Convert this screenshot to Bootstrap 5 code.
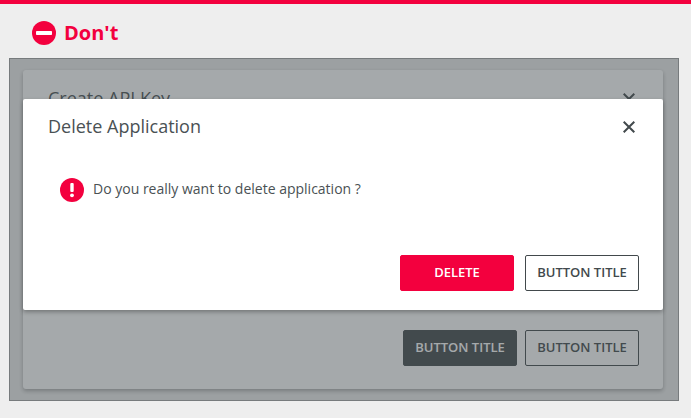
<!DOCTYPE html>
<html lang="en">
<head>
<meta charset="utf-8">
<title>Don't</title>
<link href="https://cdn.jsdelivr.net/npm/bootstrap@5.3.0/dist/css/bootstrap.min.css" rel="stylesheet">
<style>
html, body { height: 100%; }
body { background: #eeeeee; font-family: "Open Sans", "Noto Sans", sans-serif; color: #4a5154; overflow: hidden; }
.topline { height: 4px; background: #f3003e; }
.dont-head { height: 54px; padding: 3px 0 0 32px; gap: 8px; color: #f3003e; font-size: 20px; font-weight: 700; }
.stage { position: relative; height: 343px; margin: 0 12px 0 9px; border: 1px solid #777b7d; padding: 11px 15px 11px 13px; background: #eeeeee; }
.under-card { height: 319px; border-radius: 3px; background: #fff; box-shadow: 0 2px 4px rgba(0,0,0,.3); }
.under-head { height: 57px; padding: 0 28px 0 25px; font-size: 18px; margin-bottom: 203px; }
.under-foot { padding: 0 24px 0 0; gap: 8px; }
.scrim { position: absolute; inset: 0; background: rgba(66,75,79,.48); }
.dlg { position: absolute; left: 13px; right: 15px; top: 40px; height: 211px; background: #fff; border-radius: 2px; box-shadow: 0 2px 4px rgba(0,0,0,.3); }
.dlg-head { height: 57px; padding: 0 28px 2px 25px; font-size: 18px; }
.dlg-body { height: 99px; padding: 0 37px 32px; gap: 9px; font-size: 14px; }
.dlg-body span { position: relative; top: -1px; }
.dlg-foot { padding-right: 24px; gap: 11px; }
.act { width: 114px; height: 36px; padding: 0 0 1px; border-radius: 2px; font-size: 13px; font-weight: 600; line-height: 1; display: flex; align-items: center; justify-content: center; }
.act-out { background: #fff; border: 1px solid #42494c; color: #42494c; }
.act-dark { background: #42494c; border: 1px solid #42494c; color: #fff; }
.act-red { background: #f3003e; border: 1px solid #f3003e; color: #fff; }
.x-btn { background: none; border: 0; padding: 0; line-height: 0; color: #42494c; }
</style>
</head>
<body>
<div class="topline"></div>
<div class="dont-head d-flex align-items-center">
  <svg width="24" height="24" viewBox="0 0 24 24"><circle cx="12" cy="12" r="12" fill="#f3003e"/><rect x="4" y="10" width="16" height="4" rx=".8" fill="#fff"/></svg>
  <span>Don't</span>
</div>
<div class="stage">
  <div class="under-card">
    <div class="under-head d-flex justify-content-between align-items-center">
      <span>Create API Key</span>
      <button class="x-btn" type="button" aria-label="Close"><svg width="12" height="12" viewBox="0 0 12 12"><path d="M.7.7l10.6 10.6M11.3.7L.7 11.3" stroke="currentColor" stroke-width="2" fill="none"/></svg></button>
    </div>
    <div class="under-foot d-flex justify-content-end">
      <button class="act act-dark" type="button">BUTTON TITLE</button>
      <button class="act act-out" type="button">BUTTON TITLE</button>
    </div>
  </div>
  <div class="scrim"></div>
  <div class="dlg">
    <div class="dlg-head d-flex justify-content-between align-items-center">
      <span>Delete Application</span>
      <button class="x-btn" type="button" aria-label="Close"><svg width="12" height="12" viewBox="0 0 12 12"><path d="M.7.7l10.6 10.6M11.3.7L.7 11.3" stroke="currentColor" stroke-width="2" fill="none"/></svg></button>
    </div>
    <div class="dlg-body d-flex align-items-center">
      <svg width="24" height="24" viewBox="0 0 24 24"><circle cx="12" cy="12" r="12" fill="#f3003e"/><rect x="10.3" y="5" width="3.4" height="9" rx="1" fill="#fff"/><circle cx="12" cy="17.3" r="1.9" fill="#fff"/></svg>
      <span>Do you really want to delete application ?</span>
    </div>
    <div class="dlg-foot d-flex justify-content-end">
      <button class="act act-red" type="button">DELETE</button>
      <button class="act act-out" type="button">BUTTON TITLE</button>
    </div>
  </div>
</div>
<script src="https://cdn.jsdelivr.net/npm/bootstrap@5.3.0/dist/js/bootstrap.bundle.min.js"></script>
</body>
</html>
